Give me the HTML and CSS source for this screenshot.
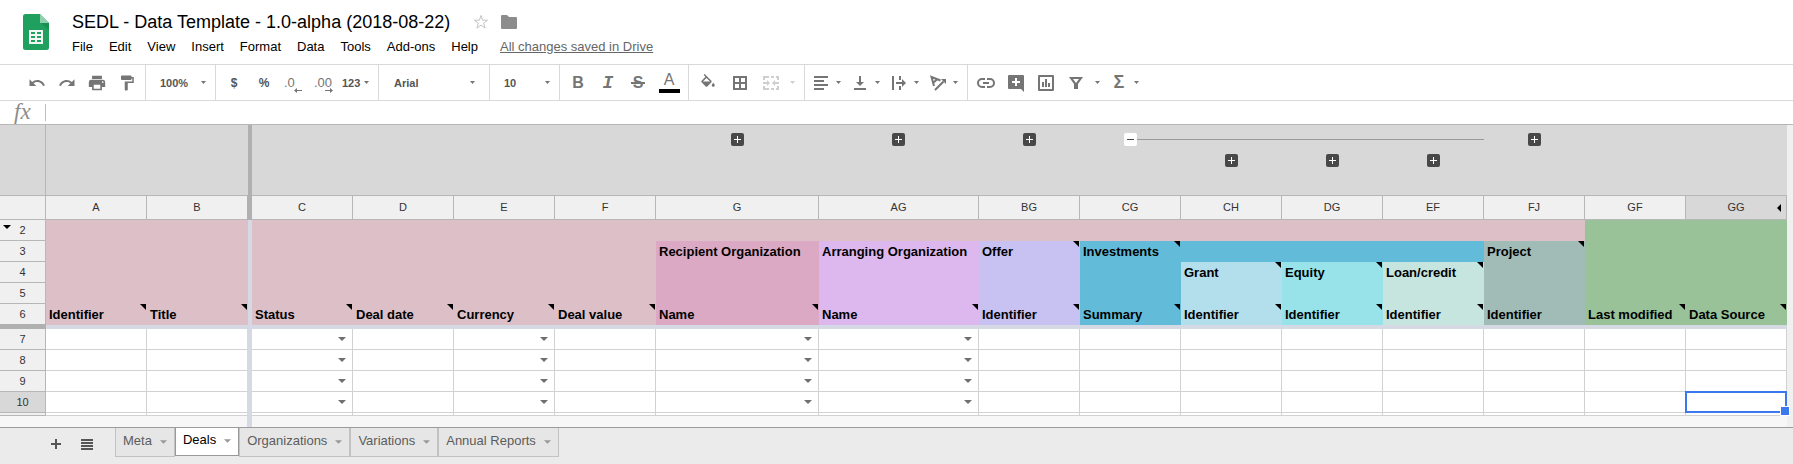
FILE: index.html
```html
<!DOCTYPE html>
<html lang="en">
<head>
<meta charset="utf-8">
<meta name="viewport" content="width=device-width, initial-scale=1">
<title>SEDL - Data Template - 1.0-alpha (2018-08-22)</title>
<link rel="stylesheet" href="styles.css">
</head>
<body>
<svg class="sprite" aria-hidden="true">
  <symbol id="caret" viewBox="0 0 5 3"><path d="M0 0h5L2.500 3z"/></symbol>
  <symbol id="caret-wide" viewBox="0 0 8 4"><path d="M0 0h8L4 4z"/></symbol>
  <symbol id="plus" viewBox="0 0 13 13"><path d="M3 6h3V3h1v3h3v1H7v3H6V7H3z"/></symbol>
</svg>

<header class="masthead">
  <svg class="logo" viewBox="0 0 26 36" aria-label="Sheets">
    <path fill="#20a05f" d="M2.500 0H17l9 9v24.500a2.500 2.500 0 0 1-2.500 2.500h-21A2.500 2.500 0 0 1 0 33.500v-31A2.500 2.500 0 0 1 2.500 0z"/>
    <path fill="#8fd0af" d="M17 0l9 9h-9z"/>
    <path fill="#178048" opacity=".6" d="M18 9h8v7z"/>
    <path fill="#f1f8f4" fill-rule="evenodd" d="M6 16h14v14H6zM8 18v2h4v-2zm6 0v2h4v-2zm-6 4v2h4v-2zm6 0v2h4v-2zm-6 4v2h4v-2zm6 0v2h4v-2z"/>
  </svg>
  <div class="masthead-text">
    <div class="title-row">
      <h1>SEDL - Data Template - 1.0-alpha (2018-08-22)</h1>
      <button class="star" aria-label="Star"><svg width="16" height="16" viewBox="0 0 16 16" fill="none" stroke="#c4c4c4"><path d="M8 1.500l1.600 4.700h5L10.600 9.200l1.500 4.900L8 11.200l-4.100 2.900 1.500-4.900L1.400 6.200h5z"/></svg></button>
      <button aria-label="Move to folder"><svg width="16" height="14" viewBox="0 0 16 14" fill="#8c8c8c"><path d="M0 1Q0 0 1 0h5l2 2h7q1 0 1 1v10q0 1-1 1H1q-1 0-1-1z"/></svg></button>
    </div>
    <nav class="menus" aria-label="Menu">
      <button>File</button><button>Edit</button><button>View</button><button>Insert</button><button>Format</button><button>Data</button><button>Tools</button><button>Add-ons</button><button>Help</button>
      <a href="#history">All changes saved in Drive</a>
    </nav>
  </div>
</header>

<div class="toolbar" role="toolbar" aria-label="Formatting">
  <div class="group first">
    <button class="tool" aria-label="Undo"><svg class="icon" viewBox="0 0 24 24"><path d="M12.500 8c-2.650 0-5.050 1-6.900 2.600L2 7v9h9l-3.600-3.600c1.400-1.200 3.100-1.900 5.100-1.900 3.500 0 6.500 2.300 7.600 5.500l2.400-.8C21 11 17.100 8 12.500 8z"/></svg></button>
    <button class="tool" aria-label="Redo"><svg class="icon" viewBox="0 0 24 24"><path d="M18.400 10.600C16.500 9 14.100 8 11.500 8c-4.600 0-8.600 3-10 7.200L3.900 16c1-3.200 4.100-5.500 7.600-5.500 2 0 3.700.7 5.100 1.900L13 16h9V7z"/></svg></button>
    <button class="tool" aria-label="Print"><svg class="icon" viewBox="1 1 22 22"><path fill-rule="evenodd" d="M19 8H5a3 3 0 0 0-3 3v6h4v4h12v-4h4v-6a3 3 0 0 0-3-3zm-3 11H8v-5h8zm3-7a1 1 0 1 1 0-2 1 1 0 0 1 0 2zM18 3H6v4h12z"/></svg></button>
    <button class="tool" aria-label="Paint format"><svg class="icon" viewBox="0 0 24 24"><path d="M18 4V3c0-.6-.4-1-1-1H5c-.6 0-1 .4-1 1v4c0 .6.4 1 1 1h12c.6 0 1-.4 1-1V6h1v4H9v11c0 .6.400 1 1 1h2c.6 0 1-.4 1-1v-9h8V4z"/></svg></button>
  </div>
  <div class="group picker small">
    <select aria-label="Zoom"><option>100%</option></select>
    <svg class="caret"><use href="#caret"/></svg>
  </div>
  <div class="group">
    <button class="tool symbol" aria-label="Format as currency">$</button>
    <button class="tool symbol" aria-label="Format as percent">%</button>
    <button class="tool decimal fewer" aria-label="Decrease decimal places">.0<svg viewBox="0 0 8 5"><path d="M0 2.500L3 0v2h5v1H3v2z"/></svg></button>
    <button class="tool decimal more" aria-label="Increase decimal places">.00<svg viewBox="0 0 8 5"><path d="M8 2.500L5 0v2H0v1h5v2z"/></svg></button>
    <button class="tool formats" aria-label="More formats">123<svg class="caret"><use href="#caret"/></svg></button>
  </div>
  <div class="group picker family">
    <select aria-label="Font"><option>Arial</option></select>
    <svg class="caret"><use href="#caret"/></svg>
  </div>
  <div class="group picker small">
    <select aria-label="Font size"><option>10</option></select>
    <svg class="caret"><use href="#caret"/></svg>
  </div>
  <div class="group">
    <button class="tool letter bold" aria-label="Bold">B</button>
    <button class="tool letter italic" aria-label="Italic">I</button>
    <button class="tool letter strike" aria-label="Strikethrough">S</button>
    <button class="tool wide letter color" aria-label="Text color">A</button>
  </div>
  <div class="group">
    <button class="tool wide" aria-label="Fill color"><svg class="icon" viewBox="0 0 24 24"><path fill-rule="evenodd" d="M16.560 8.940L7.620 0 6.210 1.410l2.380 2.380-5.150 5.150c-.59.59-.59 1.540 0 2.120l5.500 5.500c.29.29.68.44 1.060.44s.77-.15 1.060-.44l5.500-5.500c.59-.58.59-1.530 0-2.120zM5.210 10L10 5.210 14.790 10zM19 11.500s-2 2.170-2 3.500a2 2 0 0 0 4 0c0-1.330-2-3.500-2-3.500z"/></svg></button>
    <button class="tool wide" aria-label="Borders"><svg class="icon" viewBox="0 0 18 18"><path fill-rule="evenodd" d="M2 2h14v14H2zm2 2v4h4V4zm6 0v4h4V4zm-6 6v4h4v-4zm6 0v4h4v-4z"/></svg></button>
    <button class="tool split spaced off" aria-label="Merge cells" disabled><svg class="icon" viewBox="0 0 18 18"><path d="M1 2h6v2H3v2H1zM9 2h3v2H9zM14 2h3v4h-2V4h-1zM1 12h2v2h4v2H1zM9 14h3v2H9zM15 12h2v4h-3v-2h1zM1 8h4V6l3 3-3 3v-2H1zM17 8h-4V6l-3 3 3 3v-2h4z"/></svg><svg class="caret"><use href="#caret"/></svg></button>
  </div>
  <div class="group">
    <button class="tool split" aria-label="Horizontal align"><svg class="icon" viewBox="0 0 18 18"><path d="M2 2h14v2H2zM2 6h10v2H2zM2 10h14v2H2zM2 14h10v2H2z"/></svg><svg class="caret"><use href="#caret"/></svg></button>
    <button class="tool split" aria-label="Vertical align"><svg class="icon" viewBox="0 0 18 18"><path d="M8 2h2v6h3l-4 4-4-4h3zM3 14h12v2H3z"/></svg><svg class="caret"><use href="#caret"/></svg></button>
    <button class="tool split" aria-label="Text wrapping"><svg class="icon" viewBox="0 0 18 18"><path d="M2 2h2v14H2zM9 2h2v4H9zM9 12h2v4H9zM6 8h6V5l4 4-4 4v-3H6z"/></svg><svg class="caret"><use href="#caret"/></svg></button>
    <button class="tool split" aria-label="Text rotation"><svg class="icon" viewBox="0 0 18 18" fill="none" stroke="#757575" stroke-width="2"><path d="M5 12L2.500 3l9 3.500M4.500 8.500L8 5.500M6 16l8.500-8.500"/><path fill="#757575" stroke="none" d="M17 5v5l-5-5z"/></svg><svg class="caret"><use href="#caret"/></svg></button>
  </div>
  <div class="group last">
    <button class="tool" aria-label="Insert link"><svg class="icon" viewBox="0 0 18 18" fill="none" stroke="#757575" stroke-width="2"><path d="M8 5H5a4 4 0 0 0 0 8h3M10 5h3a4 4 0 0 1 0 8h-3M6 9h6"/></svg></button>
    <button class="tool" aria-label="Insert comment"><svg class="icon" viewBox="0 0 18 18"><path fill-rule="evenodd" d="M2 1h14q1 0 1 1v16l-3-3H2q-1 0-1-1V2q0-1 1-1zm6 3v3H5v2h3v3h2V9h3V7h-3V4z"/></svg></button>
    <button class="tool" aria-label="Insert chart"><svg class="icon" viewBox="0 0 18 18"><path fill-rule="evenodd" d="M2 1h14q1 0 1 1v14q0 1-1 1H2q-1 0-1-1V2q0-1 1-1zm1 2v12h12V3zM5 8h2v5H5zm3-3h2v8H8zm3 4h2v4h-2z"/></svg></button>
    <button class="tool split spaced" aria-label="Filter"><svg class="icon" viewBox="0 0 18 18"><path fill-rule="evenodd" d="M2 3h14l-5 7v5H7v-5zm4 2l3 4 3-4z"/></svg><svg class="caret"><use href="#caret"/></svg></button>
    <button class="tool split sum" aria-label="Functions"><span>Σ</span><svg class="caret"><use href="#caret"/></svg></button>
  </div>
</div>

<div class="formula">
  <label for="formula-input">fx</label>
  <input id="formula-input" type="text">
</div>

<main class="sheet">
<table>
  <colgroup>
    <col class="c-head"><col class="c-std" span="2"><col class="c-freeze"><col class="c-std" span="4"><col class="c-g"><col class="c-ag"><col class="c-std" span="8">
  </colgroup>
  <thead>
    <tr class="groups">
      <td class="corner"></td><td colspan="2"></td><td class="bar"></td><td colspan="4"></td>
      <td><button class="toggle" aria-label="Expand G"><svg><use href="#plus"/></svg></button></td>
      <td><button class="toggle" aria-label="Expand AG"><svg><use href="#plus"/></svg></button></td>
      <td><button class="toggle" aria-label="Expand BG"><svg><use href="#plus"/></svg></button></td>
      <td class="run-start"><button class="toggle open" aria-label="Collapse CG"><svg viewBox="0 0 13 13"><path d="M3 6h7v1H3z"/></svg></button></td>
      <td class="run"><button class="toggle" aria-label="Expand CH"><svg><use href="#plus"/></svg></button></td>
      <td class="run"><button class="toggle" aria-label="Expand DG"><svg><use href="#plus"/></svg></button></td>
      <td class="run"><button class="toggle" aria-label="Expand EF"><svg><use href="#plus"/></svg></button></td>
      <td><button class="toggle" aria-label="Expand FJ"><svg><use href="#plus"/></svg></button></td>
      <td colspan="2"></td>
    </tr>
    <tr class="letters">
      <td></td><th scope="col">A</th><th scope="col" class="edge">B</th><td class="bar"></td><th scope="col">C</th><th scope="col">D</th><th scope="col">E</th><th scope="col">F</th><th scope="col">G</th><th scope="col">AG</th><th scope="col">BG</th><th scope="col">CG</th><th scope="col">CH</th><th scope="col">DG</th><th scope="col">EF</th><th scope="col">FJ</th><th scope="col">GF</th><th scope="col" class="current">GG<svg class="hidden-cols" viewBox="0 0 4 8"><path d="M4 0v8L0 4z"/></svg></th>
    </tr>
  </thead>
  <tbody class="titles">
    <tr><th scope="row">2<svg class="hidden-rows" viewBox="0 0 8 4"><path d="M0 0h8L4 4z"/></svg></th><td class="pink" colspan="2"></td><td class="freeze"></td><td class="pink" colspan="12"></td><td class="green" colspan="2"></td></tr>
    <tr><th scope="row">3</th><td class="pink" colspan="2"></td><td class="freeze"></td><td class="pink" colspan="4"></td><td class="rose">Recipient Organization</td><td class="orchid">Arranging Organization</td><td class="lilac note">Offer</td><td class="blue note">Investments</td><td class="blue" colspan="3"></td><td class="slate note">Project</td><td class="green" colspan="2"></td></tr>
    <tr><th scope="row">4</th><td class="pink" colspan="2"></td><td class="freeze"></td><td class="pink" colspan="4"></td><td class="rose"></td><td class="orchid"></td><td class="lilac"></td><td class="blue"></td><td class="sky note">Grant</td><td class="aqua note">Equity</td><td class="mint note">Loan/credit</td><td class="slate"></td><td class="green" colspan="2"></td></tr>
    <tr><th scope="row">5</th><td class="pink" colspan="2"></td><td class="freeze"></td><td class="pink" colspan="4"></td><td class="rose"></td><td class="orchid"></td><td class="lilac"></td><td class="blue"></td><td class="sky"></td><td class="aqua"></td><td class="mint"></td><td class="slate"></td><td class="green" colspan="2"></td></tr>
    <tr><th scope="row" class="last-frozen">6</th><td class="pink note">Identifier</td><td class="pink note">Title</td><td class="freeze"></td><td class="pink note">Status</td><td class="pink note">Deal date</td><td class="pink note">Currency</td><td class="pink note">Deal value</td><td class="rose note">Name</td><td class="orchid note">Name</td><td class="lilac note">Identifier</td><td class="blue note">Summary</td><td class="sky note">Identifier</td><td class="aqua note">Identifier</td><td class="mint note">Identifier</td><td class="slate">Identifier</td><td class="green note">Last modified</td><td class="green note">Data Source</td></tr>
    <tr class="freeze-row"><td class="bar"></td><td class="freeze" colspan="17"></td></tr>
  </tbody>
  <tbody class="data">
    <tr><th scope="row">7</th><td></td><td class="edge"></td><td class="freeze"></td><td><button class="pick" aria-label="Choose status"><svg><use href="#caret-wide"/></svg></button></td><td></td><td><button class="pick" aria-label="Choose currency"><svg><use href="#caret-wide"/></svg></button></td><td></td><td><button class="pick" aria-label="Choose recipient"><svg><use href="#caret-wide"/></svg></button></td><td><button class="pick" aria-label="Choose arranger"><svg><use href="#caret-wide"/></svg></button></td><td></td><td></td><td></td><td></td><td></td><td></td><td></td><td></td></tr>
    <tr><th scope="row">8</th><td></td><td class="edge"></td><td class="freeze"></td><td><button class="pick" aria-label="Choose status"><svg><use href="#caret-wide"/></svg></button></td><td></td><td><button class="pick" aria-label="Choose currency"><svg><use href="#caret-wide"/></svg></button></td><td></td><td><button class="pick" aria-label="Choose recipient"><svg><use href="#caret-wide"/></svg></button></td><td><button class="pick" aria-label="Choose arranger"><svg><use href="#caret-wide"/></svg></button></td><td></td><td></td><td></td><td></td><td></td><td></td><td></td><td></td></tr>
    <tr><th scope="row">9</th><td></td><td class="edge"></td><td class="freeze"></td><td><button class="pick" aria-label="Choose status"><svg><use href="#caret-wide"/></svg></button></td><td></td><td><button class="pick" aria-label="Choose currency"><svg><use href="#caret-wide"/></svg></button></td><td></td><td><button class="pick" aria-label="Choose recipient"><svg><use href="#caret-wide"/></svg></button></td><td><button class="pick" aria-label="Choose arranger"><svg><use href="#caret-wide"/></svg></button></td><td></td><td></td><td></td><td></td><td></td><td></td><td></td><td></td></tr>
    <tr><th scope="row" class="current">10</th><td></td><td class="edge"></td><td class="freeze"></td><td><button class="pick" aria-label="Choose status"><svg><use href="#caret-wide"/></svg></button></td><td></td><td><button class="pick" aria-label="Choose currency"><svg><use href="#caret-wide"/></svg></button></td><td></td><td><button class="pick" aria-label="Choose recipient"><svg><use href="#caret-wide"/></svg></button></td><td><button class="pick" aria-label="Choose arranger"><svg><use href="#caret-wide"/></svg></button></td><td></td><td></td><td></td><td></td><td></td><td></td><td></td><td class="selected"></td></tr>
    <tr class="sliver"><th></th><td></td><td class="edge"></td><td class="freeze"></td><td></td><td></td><td></td><td></td><td></td><td></td><td></td><td></td><td></td><td></td><td></td><td></td><td></td><td></td></tr>
  </tbody>
  <tfoot>
    <tr class="scroll-track"><td colspan="2"></td><td class="edge"></td><td class="freeze"></td><td colspan="14"></td></tr>
  </tfoot>
</table>
</main>

<footer class="tabbar">
  <button class="add" aria-label="Add sheet"><svg width="12" height="12" viewBox="0 0 12 12"><path d="M5 1h2v4h4v2H7v4H5V7H1V5h4z"/></svg></button>
  <button class="all" aria-label="All sheets"><svg width="12" height="11" viewBox="0 0 12 11"><path d="M0 0h12v2H0zM0 3h12v2H0zM0 6h12v2H0zM0 9h12v2H0z"/></svg></button>
  <div class="tabs">
    <button class="tab">Meta<svg><use href="#caret-wide"/></svg></button>
    <button class="tab active">Deals<svg><use href="#caret-wide"/></svg></button>
    <button class="tab">Organizations<svg><use href="#caret-wide"/></svg></button>
    <button class="tab">Variations<svg><use href="#caret-wide"/></svg></button>
    <button class="tab">Annual Reports<svg><use href="#caret-wide"/></svg></button>
  </div>
</footer>
</body>
</html>
```
FILE: styles.css
```css
:root {
  --line: #b7b7b7;
  --cell-line: #d2d2d2;
  --bar: #b0b0b0;
  --freeze: #d5d9e4;
  --icon: #757575;
}

* { box-sizing: border-box; }

body {
  margin: 0;
  min-height: 100vh;
  display: flex;
  flex-direction: column;
  background: #fff;
  color: #000;
  font-family: "Liberation Sans", Arial, sans-serif;
  font-size: 13px;
}

button, select, input {
  margin: 0;
  padding: 0;
  border: 0;
  background: none;
  color: inherit;
  font: inherit;
}

svg { display: block; }
.sprite { position: absolute; width: 0; height: 0; }

/* Document title and menus */
.masthead {
  display: flex;
  gap: 23px;
  padding: 11px 23px 9px;
}
.logo { width: 26px; height: 36px; margin-top: 3px; }
.masthead-text { display: flex; flex-direction: column; gap: 6px; }
.title-row { display: flex; align-items: center; gap: 12px; height: 22px; }
.title-row h1 { margin: 0; font-size: 18px; line-height: 22px; font-weight: 400; white-space: nowrap; }
.star { margin-left: 11px; }
.menus { display: flex; gap: 16px; line-height: 16px; white-space: nowrap; }
.menus a { margin-left: 6px; color: #666; }

/* Toolbar */
.toolbar {
  display: flex;
  height: 37px;
  border-top: 1px solid #d9d9d9;
  border-bottom: 1px solid #d9d9d9;
  color: #555;
}
.group {
  display: flex;
  align-items: center;
  padding: 0 3px;
  border-right: 1px solid #d9d9d9;
}
.group.first { padding-left: 22px; }
.group.last { border-right: 0; }
.tool {
  position: relative;
  display: flex;
  align-items: center;
  justify-content: center;
  width: 30px;
  height: 35px;
}
.tool.wide { width: 32px; }
.icon { width: 18px; height: 18px; fill: var(--icon); }
.icon[fill="none"] { fill: none; }
.caret { width: 5px; height: 3px; flex: none; fill: var(--icon); }
.split { justify-content: flex-start; gap: 6px; width: 39px; padding-left: 4px; }
.split.spaced { gap: 10px; width: 45px; padding-left: 6px; }
.off .icon, .off .caret { fill: #cfcfcf; }
.picker { font-size: 11px; font-weight: 700; }
.picker select { flex: 1; min-width: 0; appearance: none; }
.picker.small { width: 70px; padding: 0 9px 0 14px; }
.picker.family { width: 111px; padding: 0 14px 0 15px; }
.symbol { font-size: 12px; font-weight: 700; }
.decimal { justify-content: flex-start; padding-left: 5px; color: var(--icon); }
.decimal svg { position: absolute; bottom: 7px; width: 8px; height: 5px; fill: var(--icon); }
.fewer svg { right: 7px; }
.more svg { right: 6px; }
.formats { justify-content: flex-start; gap: 4px; width: 36px; padding-left: 3px; font-size: 11px; font-weight: 700; }
.letter { color: var(--icon); font-size: 16px; font-weight: 700; }
.italic { font-family: "Liberation Mono", monospace; font-size: 18px; font-style: italic; }
.strike::after {
  content: "";
  position: absolute;
  top: 17px;
  left: 8px;
  right: 8px;
  height: 2px;
  background: var(--icon);
}
.color { padding-bottom: 6px; font-weight: 400; }
.color::after {
  content: "";
  position: absolute;
  left: 6px;
  bottom: 7px;
  width: 21px;
  height: 4px;
  background: #000;
}
.sum span { width: 18px; color: var(--icon); font-size: 18px; font-weight: 700; text-align: center; }

/* Formula bar */
.formula { display: flex; align-items: center; height: 23px; }
.formula label {
  width: 46px;
  height: 17px;
  padding-left: 14px;
  border-right: 1px solid #c0c0c0;
  color: #8c8c8c;
  font: italic 23px/16px "Liberation Serif", serif;
}
.formula input { flex: 1; min-width: 0; height: 21px; padding: 0 4px; outline: 0; }

/* Grid */
.sheet { padding-right: 6px; border-top: 1px solid var(--line); background: #f0f0f0; }
table { width: 100%; table-layout: fixed; border-collapse: separate; border-spacing: 0; background: #fff; }
.c-head { width: 46px; }
.c-std { width: 101px; }
.c-freeze { width: 4px; }
.c-g { width: 163px; }
.c-ag { width: 160px; }
th, td { position: relative; padding: 0; line-height: 20px; white-space: nowrap; }

.groups td { height: 71px; padding-top: 8px; padding-right: 1px; border-bottom: 1px solid var(--line); background-color: #d8d8d8; vertical-align: top; }
.groups .corner { border-right: 1px solid var(--line); }
.groups .bar, .letters .bar, td.bar { background: var(--bar); border-color: var(--bar); }
.groups .run { padding-top: 29px; background: linear-gradient(#999, #999) 0 14px / 100% 1px no-repeat #d8d8d8; }
.groups .run-start { background: linear-gradient(#999, #999) 100% 14px / 50% 1px no-repeat #d8d8d8; }
.toggle { display: block; width: 13px; height: 13px; margin: 0 auto; border-radius: 2px; background: #484848; fill: #fff; }
.toggle svg { width: 13px; height: 13px; }
.toggle.open { background: #fff; fill: #484848; }

.letters th, .letters td { height: 24px; border-right: 1px solid var(--line); border-bottom: 1px solid var(--line); background: #f0f0f0; }
.letters th { padding-bottom: 2px; }
.letters th, th[scope="row"] { color: #333; font-size: 11px; font-weight: 400; text-align: center; }
.letters .edge { border-right-color: var(--bar); }
.letters .bar { border-right: 0; background: var(--bar); }
.letters .current, th.current { background: #d8d8d8; }
tbody th { border-right: 1px solid var(--line); border-bottom: 1px solid var(--line); background: #f0f0f0; }
.hidden-cols { position: absolute; top: 8px; right: 5px; width: 4px; height: 8px; }
.hidden-rows { position: absolute; top: 5px; left: 3px; width: 8px; height: 4px; }

.titles th { height: 21px; }
.titles td { padding-left: 3px; font-weight: 700; line-height: 21px; }
.titles .last-frozen { border-bottom-color: var(--bar); }
.titles .freeze, .titles .bar { padding: 0; }
.titles .freeze-row td { height: 4px; }
.pink { background: #dcbfc7; }
.rose { background: #dba9c3; }
.orchid { background: #ddb8ee; }
.lilac { background: #c8c2f2; }
.blue { background: #62bcd9; }
.sky { background: #b3dfec; }
.aqua { background: #97e3e9; }
.mint { background: #c5e5de; }
.slate { background: #a1bcb7; }
.green { background: #99c299; }
.note::after {
  content: "";
  position: absolute;
  top: 0;
  right: 1px;
  border-top: 6px solid #000;
  border-left: 6px solid transparent;
}

.data td { height: 21px; border-right: 1px solid var(--cell-line); border-bottom: 1px solid var(--cell-line); }
.data .edge, .scroll-track .edge { border-right: 1px solid var(--freeze); }
td.freeze, .data .freeze { border: 0; background: var(--freeze); }
.data .sliver td, .sliver th { height: 3px; }
.pick { display: block; width: 8px; height: 4px; margin: 0 6px 0 auto; fill: #6f6f6f; }
.pick svg { width: 8px; height: 4px; }
.selected::before {
  content: "";
  position: absolute;
  inset: -1px;
  border: 2px solid #3b78ee;
}
.selected::after {
  content: "";
  position: absolute;
  right: -4px;
  bottom: -4px;
  z-index: 1;
  width: 8px;
  height: 8px;
  border: 1px solid #fff;
  background: #3b78ee;
}
.scroll-track td { height: 11px; background: #f7f7f7; }
.scroll-track .freeze { background: var(--freeze); }

/* Sheet tabs */
.tabbar {
  flex: 1;
  display: flex;
  align-items: flex-start;
  min-height: 37px;
  padding-left: 50px;
  border-top: 1px solid #9c9c9c;
  background: #ebebeb;
}
.add, .all { height: 32px; fill: #555; }
.all { margin-left: 19px; }
.tabs { display: flex; align-items: flex-start; margin-left: 22px; }
.tab {
  display: flex;
  align-items: center;
  gap: 8px;
  height: 29px;
  padding: 0 7px 3px;
  border: 1px solid #c2c2c2;
  border-top: 0;
  background: #e6e6e6;
  color: #5c5c5c;
  white-space: nowrap;
}
.tab svg { width: 7px; height: 4px; margin-top: 2px; fill: #999; }
.tab.active { height: 28px; padding: 0 7px 4px; border-color: #999; background: #fff; color: #000; }
```
